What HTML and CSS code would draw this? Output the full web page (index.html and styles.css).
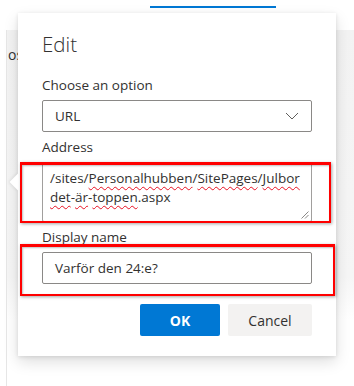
FILE: index.html
```html
<!DOCTYPE html>
<html lang="sv">
<head>
  <meta charset="UTF-8">
  <title>Edit link</title>
  <link rel="stylesheet" href="styles.css">
</head>
<body>
  <div class="page">
    <div class="topbar"><span class="tab"></span></div>
    <div class="content">
      <div class="panel"><span class="peek">os</span></div>
    </div>
  </div>

  <div class="callout">
    <span class="beak"></span>
    <div class="callout-inner">
      <h1 class="title">Edit</h1>

      <label class="label">Choose an option</label>
      <div class="dropdown">
        <span>URL</span>
        <svg class="chevron" width="14" height="8" viewBox="0 0 14 8">
          <polyline points="1,1 7,7 13,1" fill="none" stroke="#605e5c" stroke-width="1"/>
        </svg>
      </div>

      <label class="label">Address</label>
      <div class="textarea">
        /sites/<span class="typo">Personalhubben</span>/<span class="typo">SitePages</span>/<span class="typo">Julbor</span><br>
        <span class="typo">det</span>-<span class="typo">är</span>-<span class="typo">toppen</span>.aspx
        <svg class="grip" width="8" height="8" viewBox="0 0 8 8">
          <line x1="7.5" y1="0.5" x2="0.5" y2="7.5" stroke="#8a8886" stroke-width="1"/>
          <line x1="7.5" y1="4" x2="4" y2="7.5" stroke="#8a8886" stroke-width="1"/>
        </svg>
      </div>

      <label class="label">Display name</label>
      <div class="textfield">Varför den 24:e?</div>

      <div class="actions">
        <button class="btn btn-primary">OK</button>
        <button class="btn btn-default">Cancel</button>
      </div>
    </div>

    <div class="mark mark-address"></div>
    <div class="mark mark-name"></div>
  </div>
</body>
</html>
```

FILE: styles.css
```css
/* Page behind the callout */
* {
  margin: 0;
  padding: 0;
  box-sizing: border-box;
}

body {
  font-family: 'Open Sans', 'Noto Sans', sans-serif;
  color: #323130;
  background: #fff;
  width: 354px;
  height: 386px;
  overflow: hidden;
  position: relative;
}

.page {
  height: 100%;
  display: flex;
  flex-direction: column;
}

.topbar {
  height: 30px;
  background: #fff;
  padding-top: 6px;
  padding-left: 150px;
}

.tab {
  display: block;
  width: 126px;
  height: 2px;
  background: #0078d4;
}

.content {
  flex: 1;
  margin-left: 6px;
  border-left: 1px solid #e6e6e6;
  display: flex;
  flex-direction: column;
}

.panel {
  height: 290px;
  background: linear-gradient(#f3f3f3, #f6f6f6 85%, #fff);
  padding: 13px 0 0 1px;
}

.peek {
  font-size: 14px;
  color: #333;
}

/* Callout */
.callout {
  position: absolute;
  left: 18px;
  top: 13px;
  width: 318px;
  background: #fff;
  box-shadow: 0 6px 14px rgba(0, 0, 0, 0.13), 0 1px 4px rgba(0, 0, 0, 0.11);
}

.beak {
  position: absolute;
  left: -6px;
  top: 163px;
  width: 12px;
  height: 12px;
  background: #fff;
  transform: rotate(45deg);
  box-shadow: -1px 1px 3px rgba(0, 0, 0, 0.08);
}

.callout-inner {
  position: relative;
  background: #fff;
  padding: 17px 24px 20px;
}

.title {
  font-size: 20.5px;
  font-weight: 300;
  line-height: 28px;
  color: #323130;
  margin-bottom: 12px;
}

.label {
  display: block;
  font-size: 13.5px;
  line-height: 20px;
  padding: 5px 0;
}

.dropdown {
  height: 32px;
  border: 1px solid #8a8886;
  border-radius: 2px;
  padding: 0 12px;
  font-size: 13.5px;
  line-height: 30px;
  display: flex;
  align-items: center;
  justify-content: space-between;
}

.textarea {
  position: relative;
  height: 60px;
  border: 1px solid #a19f9d;
  border-radius: 2px;
  padding: 6px 7px;
  font-size: 13.5px;
  line-height: 19px;
}

.typo {
  text-decoration: underline wavy #e81123;
  text-decoration-thickness: 1px;
  text-underline-offset: 3px;
  text-decoration-skip-ink: none;
}

.grip {
  position: absolute;
  right: 2px;
  bottom: 2px;
}

.textfield {
  height: 32px;
  border: 1px solid #8a8886;
  border-radius: 2px;
  padding: 0 12px;
  font-size: 13.5px;
  line-height: 30px;
}

.actions {
  display: flex;
  justify-content: flex-end;
  gap: 8px;
  margin-top: 20px;
}

.btn {
  height: 32px;
  border: none;
  border-radius: 2px;
  font-family: inherit;
  font-size: 14px;
}

.btn-primary {
  width: 80px;
  background: #0078d4;
  color: #fff;
  font-weight: 700;
}

.btn-default {
  width: 84px;
  background: #f3f2f1;
  color: #323130;
  font-weight: 500;
}

/* Red annotation boxes */
.mark {
  position: absolute;
  border: 2px solid #ff0000;
  box-shadow: 1px 1px 3px rgba(0, 0, 0, 0.35), inset 1px 1px 2px rgba(0, 0, 0, 0.25);
}

.mark-address {
  left: 2px;
  top: 149px;
  width: 311px;
  height: 61px;
  border-top-width: 3px;
}

.mark-name {
  left: 2px;
  top: 231px;
  width: 315px;
  height: 52px;
  border-top-width: 3px;
}
```
